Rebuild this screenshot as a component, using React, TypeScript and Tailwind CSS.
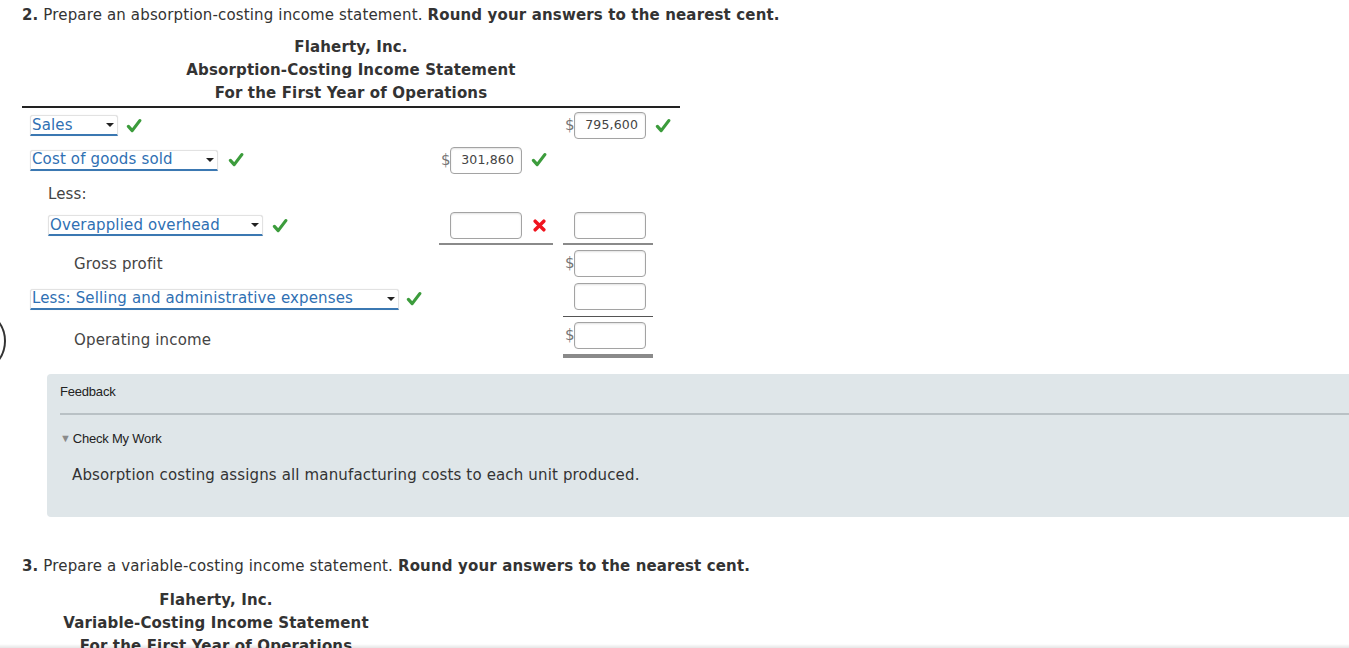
import React from 'react';

const CheckMark: React.FC<{ className?: string }> = ({ className }) => (
  <svg viewBox="0 0 16 16" className={className} fill="none">
    <path d="M2.4 8.4 L6.2 12.6 L13.8 2.6" stroke="#3c9c3c" strokeWidth="3.2" strokeLinecap="round" strokeLinejoin="round" />
  </svg>
);

const CrossMark: React.FC<{ className?: string }> = ({ className }) => (
  <svg viewBox="0 0 12 12" className={className} fill="none">
    <path d="M2 2 L10 10 M10 2 L2 10" stroke="#f0141e" strokeWidth="3.2" strokeLinecap="round" />
  </svg>
);

const verdana = "font-['DejaVu_Sans',Verdana,sans-serif] tracking-[0.15px]";

const Select: React.FC<{ label: string; width: string }> = ({ label, width }) => (
  <span
    className={`inline-flex h-[21px] items-center justify-between rounded-t-[3px] border border-b-2 border-[#e2e2e2] border-b-[#3b78b2] bg-white pl-[1px] pr-[3px] text-[15px] leading-[19px] text-[#2f70b3] shadow-[0_0_1px_rgba(0,0,0,0.15)] ${width}`}
  >
    <span>{label}</span>
    <span className="ml-2 h-0 w-0 border-x-[4px] border-t-[4px] border-x-transparent border-t-[#222]" />
  </span>
);

const Amount: React.FC<{ value?: string; dollar?: boolean }> = ({ value = '', dollar }) => (
  <div className="flex items-center">
    <span className="w-[9px] text-[15px] leading-none text-[#777]">{dollar ? '$' : ''}</span>
    <div className="flex h-[27px] w-[72px] items-center justify-end rounded-[4px] border border-[#a3a3a3] bg-white pr-[7px] text-[12.5px] text-[#444] shadow-[inset_0_1px_2px_rgba(0,0,0,0.12)]">
      {value}
    </div>
  </div>
);

export default function App() {
  return (
    <div className={`relative min-h-[648px] overflow-hidden bg-white ${verdana} text-[#333]`}>
      {/* part of a circular control cut off at the left edge */}
      <div className="absolute left-[-60px] top-[308px] h-[66px] w-[66px] rounded-full border-[2.5px] border-[#333]" />

      <div className="pl-[22px] pt-[6px]">
        <p className="text-[15px] leading-[18px]">
          <b>2.</b> Prepare an absorption-costing income statement.{' '}
          <b>Round your answers to the nearest cent.</b>
        </p>

        <div className="mt-[12px] w-[658px]">
          <div className="border-b-2 border-[#222] pb-[1px] text-center text-[15px] font-bold leading-[23px]">
            <div>Flaherty, Inc.</div>
            <div>Absorption-Costing Income Statement</div>
            <div>For the First Year of Operations</div>
          </div>

          {/* Sales */}
          <div className="flex h-[35px] items-center">
            <div className="flex w-[417px] items-center pl-[8px]">
              <Select label="Sales" width="w-[88px]" />
              <CheckMark className="ml-[8px] h-[16px] w-[16px]" />
            </div>
            <div className="w-[114px]" />
            <div className="ml-[10px] flex w-[90px] items-center pl-[2px]">
              <Amount value="795,600" dollar />
              <CheckMark className="ml-[9px] h-[16px] w-[16px] shrink-0" />
            </div>
          </div>

          {/* Cost of goods sold */}
          <div className="flex h-[34px] items-center">
            <div className="flex w-[417px] items-center pl-[8px]">
              <Select label="Cost of goods sold" width="w-[188px]" />
              <CheckMark className="ml-[10px] h-[16px] w-[16px]" />
            </div>
            <div className="flex w-[114px] items-center pl-[2px]">
              <Amount value="301,860" dollar />
              <CheckMark className="ml-[9px] h-[16px] w-[16px]" />
            </div>
          </div>

          {/* Less: */}
          <div className="flex h-[32px] items-center pl-[26px] pt-[2px] text-[15px] text-[#444]">Less:</div>

          {/* Overapplied overhead */}
          <div className="flex h-[36px]">
            <div className="flex w-[417px] items-center pb-[3px] pl-[26px]">
              <Select label="Overapplied overhead" width="w-[215px]" />
              <CheckMark className="ml-[9px] h-[16px] w-[16px]" />
            </div>
            <div className="flex w-[114px] items-center border-b-2 border-[#8a8a8a] pb-[2px] pl-[2px]">
              <Amount />
              <CrossMark className="ml-[11px] h-[13px] w-[13px]" />
            </div>
            <div className="ml-[10px] flex w-[90px] items-center border-b-2 border-[#8a8a8a] pb-[2px] pl-[2px]">
              <Amount />
            </div>
          </div>

          {/* Gross profit */}
          <div className="flex h-[36px] items-center">
            <div className="w-[417px] pl-[52px] pt-[2px] text-[15px] text-[#444]">Gross profit</div>
            <div className="w-[114px]" />
            <div className="ml-[10px] w-[90px] pl-[2px]">
              <Amount dollar />
            </div>
          </div>

          {/* Selling and administrative */}
          <div className="flex h-[36px]">
            <div className="flex w-[417px] items-center pl-[8px]">
              <Select label="Less: Selling and administrative expenses" width="w-[369px]" />
              <CheckMark className="ml-[7px] h-[16px] w-[16px]" />
            </div>
            <div className="w-[114px]" />
            <div className="ml-[10px] flex w-[90px] items-center border-b border-[#555] pb-[4px] pl-[2px]">
              <Amount />
            </div>
          </div>

          {/* Operating income */}
          <div className="flex h-[41px]">
            <div className="flex w-[417px] items-center pl-[52px] pt-[6px] text-[15px] text-[#444]">Operating income</div>
            <div className="w-[114px]" />
            <div className="ml-[10px] flex w-[90px] items-center border-b-[4px] border-[#8a8a8a] pl-[2px]">
              <Amount dollar />
            </div>
          </div>
        </div>
      </div>

      {/* Feedback */}
      <div className="ml-[47px] mr-[-20px] mt-[16px] h-[143px] rounded-[4px] bg-[#dfe6e9] pl-[13px] pt-[9px] font-['Liberation_Sans',Arial,sans-serif] text-[13px] tracking-[-0.2px] text-[#222]">
        <div className="leading-[17px]">Feedback</div>
        <div className="mt-[13px] h-[2px] bg-[#b9c1c5]" />
        <div className="mt-[15px] flex items-center leading-[17px]">
          <span className="mr-[2px] text-[11px] leading-none text-[#8a8a8a]">▼</span>
          Check My Work
        </div>
        <p className={`mt-[19px] pl-[12px] text-[15px] leading-[18px] text-[#333] ${verdana}`}>
          Absorption costing assigns all manufacturing costs to each unit produced.
        </p>
      </div>

      <div className="pl-[22px] pt-[40px]">
        <p className="text-[15px] leading-[18px]">
          <b>3.</b> Prepare a variable-costing income statement.{' '}
          <b>Round your answers to the nearest cent.</b>
        </p>
        <div className="mt-[14px] w-[388px] text-center text-[15px] font-bold leading-[23px]">
          <div>Flaherty, Inc.</div>
          <div>Variable-Costing Income Statement</div>
          <div>For the First Year of Operations</div>
        </div>
      </div>

      <div className="pointer-events-none fixed bottom-0 left-0 right-0 h-[4px] bg-gradient-to-b from-transparent to-black/10" />
    </div>
  );
}
